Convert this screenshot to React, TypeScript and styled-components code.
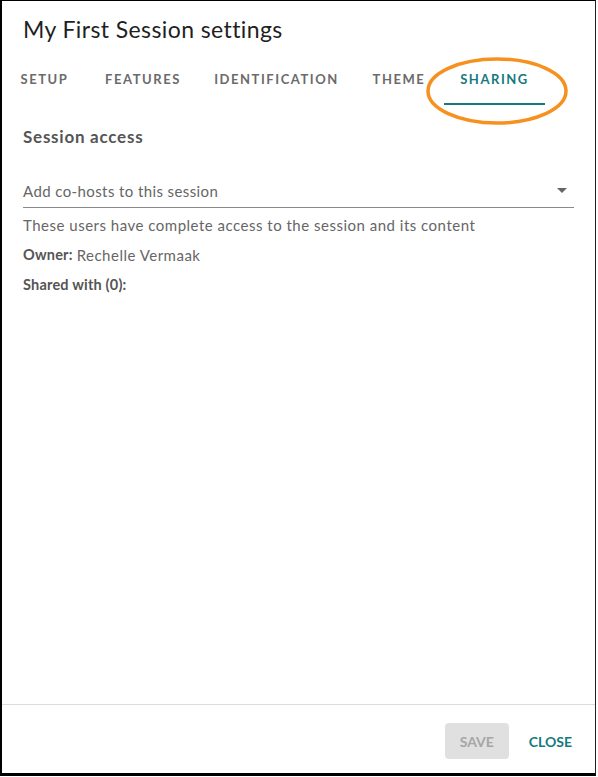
import React from "react";
import styled, { createGlobalStyle } from "styled-components";

const Global = createGlobalStyle`
  html, body { margin: 0; padding: 0; background: #fff; }
  body { font-family: Lato, "Open Sans", sans-serif; }
`;

const Frame = styled.div`
  position: relative;
  box-sizing: border-box;
  width: 596px;
  height: 776px;
  border-left: 2px solid #000;
  border-top: 1px solid #000;
  border-right: 1px solid #222;
  border-bottom: 3px solid #000;
  display: flex;
  flex-direction: column;
  background: #fff;
`;

const Title = styled.h1`
  margin: 0;
  padding: 14px 0 0 21px;
  height: 42px;
  font-size: 23px;
  letter-spacing: 0.4px;
  font-weight: 400;
  color: #1f1f1f;
  line-height: 28px;
`;

const Tabs = styled.div`
  display: flex;
  height: 48px;
`;

const Tab = styled.div<{ $active?: boolean; $w: number }>`
  box-sizing: border-box;
  width: ${(p) => p.$w}px;
  display: flex;
  align-items: center;
  justify-content: center;
  font-size: 13px;
  font-weight: 700;
  letter-spacing: 1.55px;
  text-transform: uppercase;
  color: ${(p) => (p.$active ? "#147a80" : "#6b6b6b")};
  border-bottom: 2px solid ${(p) => (p.$active ? "#147a80" : "transparent")};
  padding-bottom: 2px;
`;

const Content = styled.div`
  flex: 1;
  padding: 22px 21px 0 21px;
  display: flex;
  flex-direction: column;
`;

const Heading = styled.div`
  font-size: 17px;
  letter-spacing: 0.75px;
  font-weight: 700;
  color: #555;
  line-height: 20px;
`;

const Select = styled.div`
  margin-top: 27px;
  height: 34px;
  box-sizing: border-box;
  border-bottom: 1px solid #8a8a8a;
  display: flex;
  align-items: center;
  justify-content: space-between;
`;

const Placeholder = styled.span`
  font-size: 15px;
  letter-spacing: 0.4px;
  color: #666;
`;

const Arrow = styled.span`
  width: 0;
  height: 0;
  border-left: 5px solid transparent;
  border-right: 5px solid transparent;
  border-top: 5px solid #666;
  margin-right: 7px;
`;

const Line = styled.div<{ $gap?: number }>`
  margin-top: ${(p) => p.$gap ?? 0}px;
  font-size: 15px;
  letter-spacing: 0.5px;
  color: #666;
  line-height: 20px;
  height: 30px;
  display: flex;
  align-items: center;
  b { color: #555; font-weight: 700; margin-right: 4px; font-size: 14.5px; letter-spacing: 0.2px; }
`;

const Footer = styled.div`
  box-sizing: border-box;
  height: 69px;
  padding-top: 4px;
  border-top: 1px solid #dcdcdc;
  display: flex;
  align-items: center;
  justify-content: flex-end;
  padding-right: 11px;
  gap: 8px;
`;

const Button = styled.button<{ $variant: "disabled" | "text" }>`
  font-family: inherit;
  height: 36px;
  min-width: 64px;
  padding: 0 12px;
  border: none;
  border-radius: 4px;
  font-size: 14px;
  font-weight: 700;
  text-transform: uppercase;
  background: ${(p) => (p.$variant === "disabled" ? "#e0e0e0" : "transparent")};
  color: ${(p) => (p.$variant === "disabled" ? "#a6a6a6" : "#147a80")};
`;

const Annotation = styled.svg`
  position: absolute;
  left: 423px;
  top: 55px;
  pointer-events: none;
`;

export default function App() {
  return (
    <>
      <Global />
      <Frame>
        <Title>My First Session settings</Title>
        <Tabs>
          <Tab $w={85}>Setup</Tab>
          <Tab $w={112}>Features</Tab>
          <Tab $w={155}>Identification</Tab>
          <Tab $w={90}>Theme</Tab>
          <Tab $w={101} $active>Sharing</Tab>
        </Tabs>
        <Content>
          <Heading>Session access</Heading>
          <Select>
            <Placeholder>Add co-hosts to this session</Placeholder>
            <Arrow />
          </Select>
          <Line $gap={2}>These users have complete access to the session and its content</Line>
          <Line>
            <b>Owner:</b> Rechelle Vermaak
          </Line>
          <Line>
            <b>Shared with (0):</b>
          </Line>
        </Content>
        <Footer>
          <Button $variant="disabled" disabled>Save</Button>
          <Button $variant="text">Close</Button>
        </Footer>
        <Annotation width="146" height="72" viewBox="0 0 146 72">
          <ellipse cx="72" cy="35" rx="69" ry="32" fill="none" stroke="#f7901e" strokeWidth="3.5" />
        </Annotation>
      </Frame>
    </>
  );
}
